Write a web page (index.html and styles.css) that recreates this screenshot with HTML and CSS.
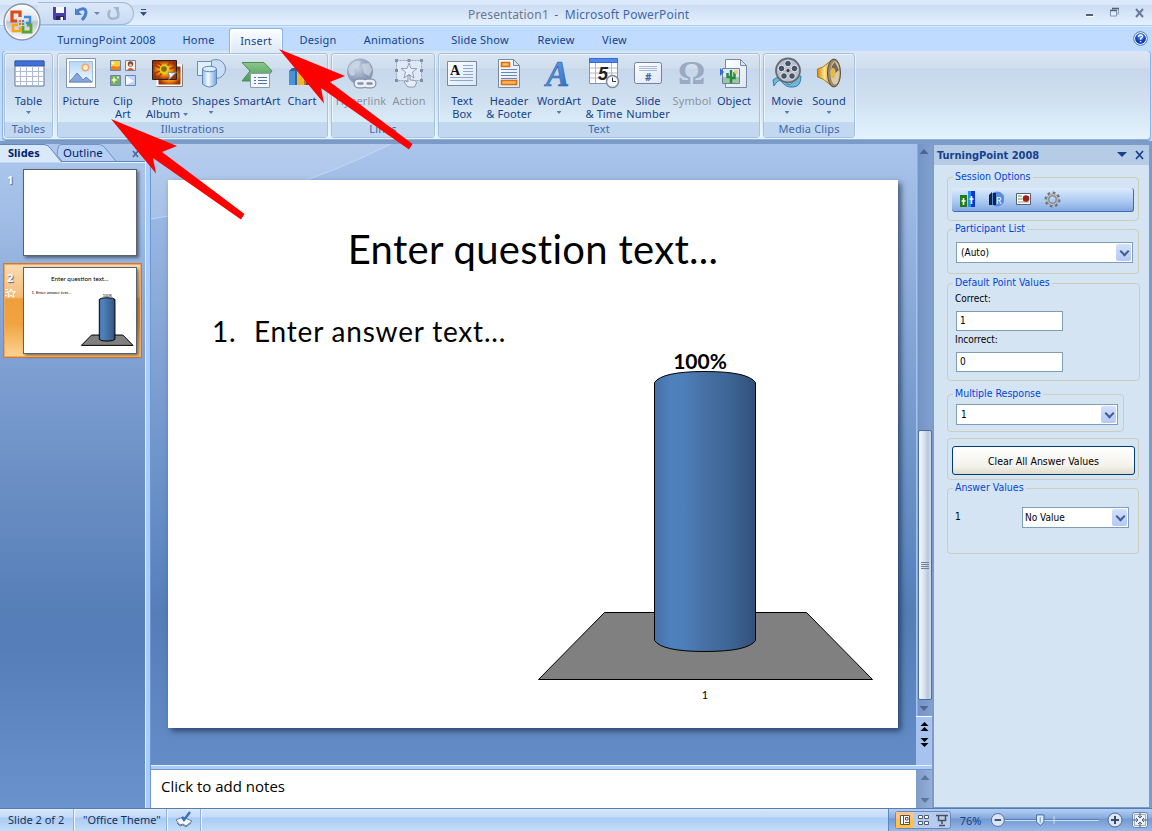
FILE: index.html
```html
<!DOCTYPE html>
<html lang="en">
<head>
<meta charset="utf-8">
<title>Presentation1 - Microsoft PowerPoint</title>
<link rel="stylesheet" href="styles.css">
</head>
<body>
<svg class="defs" width="0" height="0">
  <defs>
    <linearGradient id="cyl"><stop offset="0" stop-color="#4571a6"/><stop offset=".16" stop-color="#4f81bd"/><stop offset=".3" stop-color="#4d7eb9"/><stop offset=".52" stop-color="#466fa3"/><stop offset=".75" stop-color="#3d6594"/><stop offset="1" stop-color="#31507a"/></linearGradient>
    <linearGradient id="orb" x2="0" y2="1"><stop offset="0" stop-color="#fff"/><stop offset=".45" stop-color="#dde1e9"/><stop offset=".5" stop-color="#bcc4d2"/><stop offset="1" stop-color="#fff"/></linearGradient>
    <linearGradient id="paper" x2="1" y2="1"><stop offset="0" stop-color="#fff"/><stop offset="1" stop-color="#dce6f5"/></linearGradient>
    <linearGradient id="sky" x2="0" y2="1"><stop offset="0" stop-color="#b5d7f9"/><stop offset="1" stop-color="#eef7ff"/></linearGradient>
    <linearGradient id="tube"><stop offset="0" stop-color="#8dbbe8"/><stop offset=".4" stop-color="#f4faff"/><stop offset="1" stop-color="#72a5d9"/></linearGradient>
    <linearGradient id="green" x2="0" y2="1"><stop offset="0" stop-color="#8bc58c"/><stop offset="1" stop-color="#4b9d50"/></linearGradient>
    <linearGradient id="wordart" x2="1" y2="1"><stop offset="0" stop-color="#78b1ef"/><stop offset="1" stop-color="#2365bd"/></linearGradient>
    <linearGradient id="gold" x2="1"><stop offset="0" stop-color="#d28b10"/><stop offset=".45" stop-color="#ffe58b"/><stop offset="1" stop-color="#b97a13"/></linearGradient>
    <radialGradient id="globe" cx=".4" cy=".35"><stop offset="0" stop-color="#c8d3e3"/><stop offset="1" stop-color="#8b9ab7"/></radialGradient>
    <radialGradient id="burst"><stop offset="0" stop-color="#6b5300"/><stop offset=".25" stop-color="#e6c719"/><stop offset=".6" stop-color="#ef8a10"/><stop offset="1" stop-color="#9b2f06"/></radialGradient>
    <radialGradient id="help" cy=".3"><stop offset="0" stop-color="#5b9bff"/><stop offset="1" stop-color="#0a39b5"/></radialGradient>
    <symbol id="chart" viewBox="0 0 730 548" overflow="visible">
      <path class="line" d="M370.500 499.500L436.500 432.500H638.500L704.500 499.500Z" fill="#808080"/>
      <path class="line" d="M486.500 202.500Q494 191.500 537 191.500Q580 191.500 587.500 202.500V460.500Q580 471.500 537 471.500Q494 471.500 486.500 460.500Z" fill="url(#cyl)"/>
    </symbol>
    <symbol id="arrow" viewBox="0 0 134 101"><path d="M0 0L66 27L51 33L133.500 95L130 100.500L42 39L45 54.500Z" fill="#f00"/></symbol>
  </defs>
</svg>

<div class="window">
  <header class="titlebar">
    <div class="quick">
      <svg width="16" height="16" viewBox="0 0 16 16"><path d="M1 1H14V14H2L1 13Z" fill="#493fb0"/><path d="M4 1H12V7H4Z" fill="#f6f9ff"/><path d="M4 10H12V14H4Z" fill="#26235e"/><path d="M8.500 11H11V14H8.500Z" fill="#fff"/></svg>
      <svg width="16" height="16" viewBox="0 0 16 16"><path d="M3 5Q11 0 12 6Q12 10 8 14" fill="none" stroke="#4a7fd0" stroke-width="3"/><path d="M1 2V9H8Z" fill="#4a7fd0"/></svg>
      <svg class="drop" width="6" height="4" viewBox="0 0 6 4"><path d="M0 0H6L3 3Z" fill="#6789bb"/></svg>
      <svg width="16" height="16" viewBox="0 0 16 16"><path d="M4 4Q1 9 4 12Q8 14 12 11Q13 7 11 4" fill="none" stroke="#a6b7d1" stroke-width="2.600"/><path d="M7 1H13V7Z" fill="#a6b7d1"/></svg>
    </div>
    <svg class="customize" width="7" height="8" viewBox="0 0 7 8"><path d="M1 .5H6" stroke="#33517f"/><path d="M0 3H7L3.500 7Z" fill="#33517f"/></svg>
    <h1 class="title"><span class="doc">Presentation1</span> - &nbsp;Microsoft PowerPoint</h1>
    <div class="winbtns">
      <svg width="64" height="14" viewBox="0 0 64 14"><path d="M4 9H11" stroke="#55606f" stroke-width="2"/><path d="M4 10.500H12" stroke="#fff"/><path d="M30.500 4V2.500H36.500V8H35" fill="none" stroke="#8ba1c3"/><path d="M28.500 4.500H34.500V10H28.500Z" fill="#e4eefb" stroke="#7f98be"/><path d="M28 4.500H35M30 2.500H37" stroke="#55606f" stroke-width="1.500"/><path d="M54 3L61 11M61 3L54 11" stroke="#6a7b99" stroke-width="2"/></svg>
    </div>
    <svg class="orb" width="38" height="38" viewBox="0 0 38 38"><circle cx="19" cy="19" r="18" fill="url(#orb)" stroke="#8795ac" stroke-width="1.300"/><circle cx="19" cy="19" r="16.500" fill="none" stroke="#fff"/><g fill="none" stroke-width="3.200"><path d="M17 14V9H9V18H14" stroke="#dc4b12"/><path d="M21 14H27V20H23" stroke="#3b8be0" stroke-width="2.400"/><path d="M15 22H10V28H17V24" stroke="#f5a51a" stroke-width="2.600"/><path d="M20 23V29H28V22H24" stroke="#58a437" stroke-width="2.800"/></g><path d="M16 17H18V19H16ZM16 20H18V22H16Z" fill="#e47412"/><path d="M19 17H21V19H19Z" fill="#398ad6"/><path d="M19 20H21V22H19Z" fill="#5ba231"/></svg>
  </header>

  <nav class="tabs">
    <span class="tab t-tp">TurningPoint 2008</span><span class="tab t-home">Home</span><span class="tab t-insert active">Insert</span><span class="tab t-design">Design</span><span class="tab t-anim">Animations</span><span class="tab t-show">Slide Show</span><span class="tab t-review">Review</span><span class="tab t-view">View</span>
    <svg class="help" width="15" height="15" viewBox="0 0 15 15"><circle cx="7.500" cy="7.500" r="6.800" fill="#fff" stroke="#4b73ba"/><circle cx="7.500" cy="7.500" r="5.400" fill="url(#help)"/><path d="M5.500 6Q5.500 4 7.500 4Q9.600 4 9.500 5.700Q9.300 7 7.600 7.500V8.700M7.600 10V11.300" fill="none" stroke="#fff" stroke-width="1.400"/></svg>
  </nav>

  <div class="ribbon">
    <section class="group g-tables">
      <div class="items">
        <div class="item w47"><svg class="ic" viewBox="0 0 32 32"><path d="M2 4H31V29H2Z" fill="#fff" stroke="#66748c"/><path d="M2 4H31V9H2Z" fill="#3f6fd8" stroke="#3157b5"/><path d="M2 14.500H31M2 19.500H31M2 24.500H31M7.500 9V29M13.500 9V29M19.500 9V29M25.500 9V29" stroke="#aebbd2"/></svg><span>Table</span><i class="dd"></i></div>
      </div>
      <h2>Tables</h2>
    </section>
    <section class="group g-ill">
      <div class="items">
        <div class="item w46"><svg class="ic" viewBox="0 0 32 32"><path d="M1.500 1.500H30.500V30.500H1.500Z" fill="#fff" stroke="#8394ac"/><path d="M4.500 4.500H27.500V25H4.500Z" fill="url(#sky)" stroke="#9ac0e8"/><circle cx="20.500" cy="10.500" r="3.200" fill="#fff0d8" stroke="#f3a764" stroke-width="1.500"/><path d="M4 25Q9 20 12 16Q16 20 18 23L21 20L27 25Z" fill="#88a7d9" stroke="#6283bd"/></svg><span>Picture</span></div>
        <div class="item w38"><svg class="ic" viewBox="0 0 32 32"><g stroke="#7184a1"><path d="M3.500 3.500H13.500V13.500H3.500Z" fill="#f7d13d"/><path d="M18.500 3.500H28.500V13.500H18.500Z" fill="#f5efe8"/><path d="M3.500 18.500H13.500V28.500H3.500Z" fill="#6ab26a"/><path d="M18.500 18.500H28.500V28.500H18.500Z" fill="#bcd3fa"/></g><path d="M4 10Q7 8 9 10L13 9V13H4Z" fill="#ee7d21"/><circle cx="6" cy="6" r="1.500" fill="#fff6a1"/><circle cx="23.500" cy="7" r="2.700" fill="#7b4730"/><circle cx="23.500" cy="8" r="1.500" fill="#f3be91"/><path d="M20 13Q23.500 9 27 13Z" fill="#d94c2e"/><path d="M7 19L8 22L11 23L8 24L7 27L6 24L4 23L6 22Z" fill="#fff59a"/><circle cx="11" cy="20.500" r="1" fill="#fff"/><path d="M19 19L27 24L19 28Z" fill="#f5faff"/></svg><span>Clip<br>Art</span></div>
        <div class="item w50"><svg class="ic" viewBox="0 0 32 32"><path d="M6.500 8.500H30.500V28.500H6.500Z" fill="url(#burst)" stroke="#fff" stroke-width="2"/><path d="M5.500 29.500H31.500V7.500" fill="none" stroke="#8a7e72"/><path d="M1.500 3.500H25.500V22.500H1.500Z" fill="url(#burst)" stroke="#2b201a"/><g stroke="#a63b07" stroke-width="1.500"><path d="M2 7L9 11M5 4L11 9M2 17L9 14M21 4L16 9M25 10L18 12M6 22L11 16"/></g><circle cx="13.500" cy="12.500" r="5" fill="#e6cb22"/><circle cx="13" cy="12" r="2.800" fill="#846d0c"/><path d="M25.500 15L18 22.500Q19 18 17 15Q22 17 25.500 15Z" fill="#fff" stroke="#888"/></svg><span>Photo</span><span>Album <i class="dd inline"></i></span></div>
        <div class="item w38"><svg class="ic" viewBox="0 0 32 32"><circle cx="21" cy="12" r="9.500" fill="#c9ddf5" stroke="#6e8cb8"/><path d="M2.500 4.500H16.500V18.500H2.500Z" fill="#e3effc" stroke="#6e8cb8"/><path d="M7.500 12V27Q14.500 33 21.500 27V12Z" fill="url(#tube)" stroke="#5b87bd"/><ellipse cx="14.500" cy="12" rx="7" ry="2.700" fill="#dceeff" stroke="#5b87bd"/></svg><span>Shapes</span><i class="dd"></i></div>
        <div class="item w54"><svg class="ic" viewBox="0 0 32 32"><path d="M1 5.500H23L31 14L23 24H1L9 14Z" fill="url(#green)" stroke="#4c8f58"/><path d="M9.500 16.500H28.500V30.500H9.500Z" fill="#f4f8fd" stroke="#8c9cb5"/><path d="M13 20.500H15M17 20.500H26M13 23.500H15M17 23.500H26M13 26.500H15M17 26.500H26" stroke="#52739d"/></svg><span>SmartArt</span></div>
        <div class="item w36"><svg class="ic" viewBox="0 0 32 32"><path d="M3 14L6 11H12V28H3Z" fill="#2e67a5"/><path d="M3 14H9V28H3Z" fill="#4a91d6"/><path d="M11 6L14 3H21V28H11Z" fill="#b37d10"/><path d="M11 6H18V28H11Z" fill="#f0b52b"/><path d="M20 13L23 10H29V28H20Z" fill="#a52a20"/></svg><span>Chart</span></div>
      </div>
      <h2>Illustrations</h2>
    </section>
    <section class="group g-links">
      <div class="items">
        <div class="item w58 off"><svg class="ic" viewBox="0 0 32 32"><circle cx="15" cy="14.500" r="13" fill="url(#globe)"/><path d="M5 8Q10 2 16 4L14 9L9 12L10 18L6 19Q1 13 5 8ZM17 7L24 6L27 13L24 19L19 16Z" fill="#d6dde8" opacity=".65"/><g fill="none" stroke="#8491a9" stroke-width="5"><rect x="11" y="24" width="9" height="5" rx="2.500"/><rect x="20" y="24" width="9" height="5" rx="2.500"/></g><g fill="none" stroke="#edf1f7" stroke-width="2.500"><rect x="11" y="24" width="9" height="5" rx="2.500"/><rect x="20" y="24" width="9" height="5" rx="2.500"/></g></svg><span>Hyperlink</span></div>
        <div class="item w38 off"><svg class="ic" viewBox="0 0 32 32"><path d="M3.500 3.500H28.500V23.500H3.500Z" fill="#dfe8f5" stroke="#94a2bb" stroke-dasharray="2 1"/><path d="M16 6L18 11.500H24L19.500 15L21 21L16 17.500L11 21L12.500 15L8 11.500H14Z" fill="#e8eff8" stroke="#93a0b8"/><path d="M2 2H5V5H2ZM14.500 2H17.500V5H14.500ZM27 2H30V5H27ZM2 12H5V15H2ZM27 12H30V15H27ZM2 22H5V25H2ZM27 22H30V25H27Z" fill="#8090ab"/><path d="M15 18Q17 17 17 20V23Q24 23 23.500 26L21.500 30H15L11 25Q12 23 15 25Z" fill="#e9eef6" stroke="#8a99b3"/></svg><span>Action</span></div>
      </div>
      <h2>Links</h2>
    </section>
    <section class="group g-text">
      <div class="items">
        <div class="item w46"><svg class="ic" viewBox="0 0 32 32"><path d="M1.500 4.500H30.500V28.500H1.500Z" fill="url(#paper)" stroke="#7889a2"/><path d="M17 8.500H27M17 11.500H27M17 14.500H27M17 17.500H27M4 20.500H27M4 23.500H27" stroke="#8ba6cf"/><text x="4" y="18" class="glyph serif" font-size="14">A</text></svg><span>Text<br>Box</span></div>
        <div class="item w48"><svg class="ic" viewBox="0 0 32 32"><path d="M5.500 2.500H20.500L26.500 8.500V30.500H5.500Z" fill="url(#paper)" stroke="#7889a2"/><path d="M20.500 2.500V8.500H26.500Z" fill="#d7e4f6" stroke="#7889a2"/><path d="M8.500 5.500H16.500V9.500H8.500ZM8.500 23.500H23.500V27.500H8.500Z" fill="#ffb962" stroke="#d96f0b" stroke-width="1.600"/><path d="M8 12.500H24M8 15.500H24M8 18.500H24M8 21.500H24" stroke="#6386b8"/></svg><span>Header<br>&amp; Footer</span></div>
        <div class="item w52"><svg class="ic" viewBox="0 0 32 32"><text x="3" y="29" class="glyph wordart">A</text></svg><span>WordArt</span><i class="dd"></i></div>
        <div class="item w38"><svg class="ic" viewBox="0 0 32 32"><path d="M1.500 1.500H29.500V26.500H1.500Z" fill="#fff" stroke="#8493aa"/><path d="M1.500 1.500H29.500V5.500H1.500Z" fill="#5187ee" stroke="#376bcd"/><path d="M2 11H29M2 16H29M2 21H29M7.500 6V26M23.500 6V26" stroke="#b2b9c5"/><text x="10" y="23" class="glyph date">5</text><circle cx="24.500" cy="24.500" r="6" fill="#f4f7fb" stroke="#7a889e" stroke-width="1.500"/><path d="M24.500 20.500V24.500H28" fill="none" stroke="#333"/></svg><span>Date<br>&amp; Time</span></div>
        <div class="item w50"><svg class="ic" viewBox="0 0 32 32"><rect x="2.500" y="5.500" width="27" height="21" rx="2" fill="url(#paper)" stroke="#71839f"/><path d="M7 9.500H25M7 11.500H25M7 13.500H25" stroke="#aab9d1"/><text x="13" y="24" class="glyph hash">#</text></svg><span>Slide<br>Number</span></div>
        <div class="item w38 off"><svg class="ic" viewBox="0 0 32 32"><text x="2" y="27" class="glyph omega">Ω</text></svg><span>Symbol</span></div>
        <div class="item w46"><svg class="ic" viewBox="0 0 32 32"><path d="M7.500 2.500H22.500L28.500 8.500V30.500H7.500Z" fill="url(#paper)" stroke="#7889a2"/><path d="M22.500 2.500V8.500H28.500Z" fill="#d7e4f6" stroke="#7889a2"/><path d="M4.500 11.500H21.500V26.500H4.500Z" fill="#d7eafd" stroke="#6d8199"/><path d="M5 20H21V26H5Z" fill="#9cc7a7"/><path d="M13 13V26M9.500 16V20H13M16.500 15V21H13" fill="none" stroke="#28893f" stroke-width="2.500"/><circle cx="18" cy="15" r="2" fill="#f1ca66"/><path d="M2 11L6 15L2 19Z" fill="#2d6fd0"/></svg><span>Object</span></div>
      </div>
      <h2>Text</h2>
    </section>
    <section class="group g-media">
      <div class="items">
        <div class="item w46"><svg class="ic" viewBox="0 0 32 32"><path d="M2 23Q8 17 14 25Q20 32 24 20L30 19Q30 30 22 30Q15 31 10 24Q7 22 3 29Z" fill="#72b5da" stroke="#357faa"/><circle cx="17" cy="13.500" r="12" fill="#b9bec6" stroke="#646a74" stroke-width="1.800"/><g fill="#44546a" stroke="#e6eaef"><circle cx="17" cy="6.500" r="3.300"/><circle cx="10.500" cy="11.500" r="3.300"/><circle cx="23.500" cy="11.500" r="3.300"/><circle cx="13" cy="19" r="3.300"/><circle cx="21" cy="19" r="3.300"/></g><circle cx="17" cy="13.500" r="1.500" fill="#333"/></svg><span>Movie</span><i class="dd"></i></div>
        <div class="item w38"><svg class="ic" viewBox="0 0 32 32"><path d="M4.500 12L10 10L20 2V30L10 22L4.500 20Z" fill="url(#gold)" stroke="#b1781a"/><ellipse cx="21" cy="16" rx="6.500" ry="14" fill="#9b8a6b" stroke="#57513f"/><ellipse cx="22" cy="16" rx="4.500" ry="11.500" fill="#d9cda9"/><path d="M22 5Q16 10 20 18L26 13Z" fill="#736b58"/><ellipse cx="20" cy="16" rx="2.500" ry="5" fill="#e7b84b"/></svg><span>Sound</span><i class="dd"></i></div>
      </div>
      <h2>Media Clips</h2>
    </section>
  </div>

  <main class="work">
    <aside class="slides">
      <div class="sidetabs">
        <svg class="tabshape" width="146" height="20" viewBox="0 0 146 20"><path d="M0 1.500H44Q48 1.500 51 6L62 19.500H0Z" fill="#d9e8fb"/><path d="M58 5Q58 1.500 62 1.500H99Q103 1.500 106 6L117 19.500H63L57 12Z" fill="#b6d0f4" stroke="#7292c8"/><path d="M0 1.500H44Q48 1.500 51 6L61 18.500H145" fill="none" stroke="#6386bf"/><path d="M62 19.500H146" stroke="#e5f1ff"/><path d="M133 8L138 14M138 8L133 14" stroke="#45699f" stroke-width="1.600"/></svg>
        <b>Slides</b><span>Outline</span>
      </div>
      <div class="entry first"><div class="num">1</div><div class="thumb"></div></div>
      <div class="entry selected"><div class="num">2<svg width="12" height="10" viewBox="0 0 12 10"><path d="M0 1.500H4M0 4.500H3M0 7.500H3" stroke="#fff"/><path d="M7 .7L8.200 3.800H11.300L9 5.900L9.800 9.200L7 7.300L4.200 9.200L5 5.900L2.700 3.800H5.800Z" fill="none" stroke="#fff"/></svg></div><div class="thumb"><svg width="113" height="85" viewBox="0 0 730 548"><use href="#chart"/><text x="174" y="81" class="mini q">Enter question text...</text><text x="48" y="166" class="mini a">1. Enter answer text...</text><text x="508" y="186" class="mini p">100%</text></svg></div></div>
    </aside>
    <div class="split"></div>
    <div class="center">
      <div class="stage">
        <div class="canvas">
          <svg class="swoosh" width="765" height="180" viewBox="0 0 765 180" preserveAspectRatio="none"><path d="M0 0H240Q130 55 0 75Z" fill="#fff" opacity=".14"/><path d="M0 75Q130 55 240 0" fill="none" stroke="#d4e5fb" opacity=".6"/></svg>
          <article class="slide">
            <h3 class="question">Enter question text...</h3>
            <p class="answer"><span>1.</span><span class="atext">Enter answer text...</span></p>
            <div class="plot">
              <svg class="chart" width="730" height="548"><use href="#chart"/></svg>
              <span class="pct">100%</span><span class="cat">1</span>
            </div>
          </article>
        </div>
        <div class="vscroll"><i class="up"></i><div class="grip"><i></i><i></i><i></i><i></i></div><i class="down"></i><div class="pager"><svg width="16" height="48" viewBox="0 0 16 48"><path d="M4.500 9L8.500 5L12.500 9ZM4.500 14L8.500 10L12.500 14ZM4.500 21H12.500L8.500 25ZM4.500 26H12.500L8.500 30Z" fill="#000"/></svg></div></div>
      </div>
      <div class="hsplit"></div>
      <div class="notes"><div class="ntext">Click to add notes</div><div class="nscroll"><i class="up"></i><i class="down"></i></div></div>
    </div>
    <aside class="pane">
      <div class="phead"><b>TurningPoint 2008</b><svg width="28" height="10" viewBox="0 0 28 10"><path d="M0 2H10L5 7Z" fill="#15428b"/><path d="M19 1L26 9M26 1L19 9" stroke="#15428b" stroke-width="1.700"/></svg></div>
      <div class="pbody">
        <fieldset class="f-session"><legend>Session Options</legend>
          <div class="toolbar">
            <svg width="16" height="17" viewBox="0 0 16 17"><path d="M0 4H7V16H0Z" fill="#237a19"/><path d="M8 0H15V16H8Z" fill="#0836d6"/><path d="M8 0H11V16H8Z" fill="#2590f0"/><path d="M3.500 7V14M1.500 10H5.500M11.500 5V13M9.500 8H13.500" stroke="#fff" stroke-width="1.600"/></svg>
            <svg width="16" height="17" viewBox="0 0 16 17"><circle cx="9" cy="8" r="7.500" fill="#558ee0"/><path d="M1 4L4 1V14H1ZM5 2H8V14H5Z" fill="#142342"/><text x="8" y="13" class="glyph letter">R</text></svg>
            <svg width="16" height="17" viewBox="0 0 16 17"><path d="M.5 2.500H14.500V13.500H.5Z" fill="#fff" stroke="#52606f"/><path d="M2 5H6M2 8H6" stroke="#4da23e"/><path d="M2 11H13" stroke="#999"/><circle cx="10" cy="7.500" r="3.300" fill="#9e2013"/></svg>
            <svg width="17" height="17" viewBox="0 0 17 17"><circle cx="8.500" cy="8.500" r="6.700" fill="none" stroke="#727476" stroke-width="2.600" stroke-dasharray="2.600 2.660"/><circle cx="8.500" cy="8.500" r="4.500" fill="none" stroke="#8c8e90" stroke-width="3"/><circle cx="8.500" cy="8.500" r="5" fill="none" stroke="#c7c9ca"/></svg>
          </div></fieldset>
        <fieldset class="f-part"><legend>Participant List</legend><div class="combo"><span>(Auto)</span><i></i></div></fieldset>
        <fieldset class="f-default"><legend>Default Point Values</legend><label>Correct:</label><div class="input">1</div><label>Incorrect:</label><div class="input">0</div></fieldset>
        <fieldset class="f-multi"><legend>Multiple Response</legend><div class="combo"><span>1</span><i></i></div></fieldset>
        <fieldset class="f-clear"><button>Clear All Answer Values</button></fieldset>
        <fieldset class="f-answer"><legend>Answer Values</legend><div class="row"><label>1</label><div class="combo"><span>No Value</span><i></i></div></div></fieldset>
      </div>
    </aside>
  </main>

  <footer class="status">
    <span class="cell c1">Slide 2 of 2</span><span class="cell c2">"Office Theme"</span>
    <span class="cell c3"><svg width="18" height="17" viewBox="0 0 18 17"><path d="M1 9L8 6L17 10L11 15L8 13L5 14Z" fill="#f5f9ff" stroke="#6a7e9f"/><path d="M2 12L5 15L8 14L11 16L16 12" fill="none" stroke="#6a7e9f"/><path d="M7 6L9 9L15 1" fill="none" stroke="#3970c5" stroke-width="2.400"/></svg></span>
    <div class="tools">
      <svg class="views" width="56" height="18" viewBox="0 0 56 18"><rect x=".5" y=".5" width="55" height="17" rx="2" fill="#b3ccef" stroke="#6988b9"/><path d="M1 1H19V8H1Z" fill="#f7c48b"/><path d="M1 8H19V17H1Z" fill="#ffc246"/><path d="M5.500 4.500H14.500V13.500H5.500ZM8.500 4.500V13.500" fill="#fff" stroke="#5f5240"/><path d="M10.500 6.500H13V9H10.500ZM10 11.500H14" fill="none" stroke="#5f5240"/><path d="M23.500 4.500H27.500V7.500H23.500ZM29.500 4.500H33.500V7.500H29.500ZM23.500 10.500H27.500V13.500H23.500ZM29.500 10.500H33.500V13.500H29.500Z" fill="#fff" stroke="#505a6c"/><path d="M41 4.500H53M43.500 5V9.500H50.500V5M47 10V13M44 14.500H50" fill="none" stroke="#4a4f59" stroke-width="1.500"/></svg>
      <span class="zoom">76%</span>
      <svg class="slider" width="128" height="18" viewBox="0 0 128 18"><path d="M16 8.500H118" stroke="#5478ae"/><path d="M16 9.500H118M69.500 5V13" stroke="#d9e8fb"/><circle cx="8.500" cy="9" r="7" fill="#dce5f3" stroke="#4c6896"/><circle cx="126.500" cy="9" r="7" fill="none"/><path d="M5 9H12" stroke="#3a4a63" stroke-width="2"/><path d="M50.500 3.500H58.500V11L54.500 15L50.500 11Z" fill="#dbe9fb" stroke="#3d659f"/><path d="M54.500 6V12" stroke="#6688b8"/></svg>
      <svg class="plus" width="16" height="18" viewBox="0 0 16 18"><circle cx="8" cy="9" r="7" fill="#dce5f3" stroke="#4c6896"/><path d="M4 9H12M8 5V13" stroke="#3a4a63" stroke-width="2"/></svg>
      <svg class="fit" width="16" height="16" viewBox="0 0 16 16"><rect x=".5" y=".5" width="15" height="15" rx="2" fill="#eaf1fb" stroke="#6884ad"/><path d="M2.500 2.500H13.500V13.500H2.500Z" fill="none" stroke="#59677d" stroke-dasharray="1 1"/><path d="M8 1V6M6 4L8 6L10 4M8 15V10M6 12L8 10L10 12M1 8H6M4 6L6 8L4 10M15 8H10M12 6L10 8L12 10" fill="none" stroke="#4e5b70"/></svg>
    </div>
  </footer>

  <svg class="pointer p1" width="134" height="101"><use href="#arrow"/></svg>
  <svg class="pointer p2" width="134" height="101"><use href="#arrow"/></svg>
</div>
</body>
</html>
```
FILE: styles.css
```css
* { box-sizing: border-box; }
body { margin: 0; font-family: "Noto Sans", "Open Sans", sans-serif; font-size: 11px; color: #15428b; }
h1, h2, h3, p { margin: 0; font-weight: normal; }
svg { display: block; flex: none; }
.defs { position: absolute; }
.window { position: relative; width: 1152px; height: 831px; overflow: hidden; display: flex; flex-direction: column; background: #bfdbff; }

/* Title bar */
.titlebar { position: relative; height: 27px; flex: none; display: flex; background: linear-gradient(#dbe9fb 0 5px, #cbdcf3 5px, #e3effd 24px, #e3effd 25px, #a9cff0 25px 26px, #d8e8fb 26px); }
.quick { width: 96px; height: 23px; margin: 2px 0 0 38px; padding: 0 0 0 14px; display: flex; align-items: center; border: 1px solid #a0b9dc; border-left: none; border-radius: 0 12px 12px 0; background: linear-gradient(#dce8f8, #c8daf2); }
.quick svg + svg { margin-left: 6px; }
.quick .drop { margin-left: 4px !important; }
.customize { margin: 9px 0 0 6px; }
.title { margin: 7px 0 0 321px; font-size: 12px; line-height: 15px; letter-spacing: .17px; color: #3e6aaa; white-space: nowrap; }
.doc { color: #6a7890; margin-right: 2px; }
.winbtns { margin: 6px 6px 0 auto; }
.orb { position: absolute; left: 3px; top: 3px; z-index: 3; }

/* Tabs */
.tabs { height: 24px; flex: none; display: flex; align-items: flex-start; padding-left: 45px; background: #bfdbff; position: relative; }
.tab { height: 24px; line-height: 26px; text-align: center; white-space: nowrap; letter-spacing: .2px; }
.t-tp { width: 123px; } .t-home { width: 61px; } .t-insert { width: 54px; } .t-design { width: 70px; } .t-anim { width: 82px; } .t-show { width: 90px; } .t-review { width: 62px; } .t-view { width: 55px; }
.tab.active { margin: 1px 0 0; height: 25px; line-height: 24px; z-index: 1; border: 1px solid #8db2e3; border-bottom: none; border-radius: 3px 3px 0 0; background: linear-gradient(#fdfeff, #e8f1fc 60%, #dde8f6); box-shadow: inset 1px 1px #fff, inset -1px 0 #fff; }
.help { margin: 4px 4px 0 auto; }

/* Ribbon */
.ribbon { height: 90px; flex: none; margin: -1px 1px 0 2px; padding: 2px; display: flex; gap: 3px; border: 1px solid #8db2e3; border-radius: 4px; background: linear-gradient(#dbe6f4 0, #cfddec 17px, #c6d7ec 18px, #d1e1f1 52px, #e3f4ff 88px); box-shadow: 0 1px #7c97bd; }
.group { height: 85px; display: flex; flex-direction: column; border: 1px solid #a6c2df; border-radius: 3px; box-shadow: inset 1px 1px rgba(255,255,255,.5), 1px 0 rgba(255,255,255,.5); overflow: hidden; }
.g-tables { width: 49px; margin-left: -1px; } .g-ill { width: 271px; margin-left: 1px; } .g-links { width: 104px; } .g-text { width: 322px; } .g-media { width: 92px; }
.items { flex: 1; display: flex; padding-top: 3px; }
.item { flex: none; display: flex; flex-direction: column; align-items: center; text-align: center; line-height: 13px; white-space: nowrap; letter-spacing: .1px; }
.ic { width: 32px; height: 32px; margin-bottom: 5px; }
.off { color: #8d939e; }
.w36 { width: 36px; } .w38 { width: 38px; } .w46 { width: 46px; } .w47 { width: 47px; } .w48 { width: 48px; } .w50 { width: 50px; } .w52 { width: 52px; } .w54 { width: 54px; } .w58 { width: 58px; }
.dd { width: 5px; height: 3px; margin-top: 4px; background: #567db1; clip-path: polygon(0 0, 100% 0, 50% 100%); }
.dd.inline { display: inline-block; margin: 0 0 2px; }
.group h2 { height: 15px; line-height: 14px; font-size: 11px; text-align: center; color: #3e6aaa; background: #c1d8f0; letter-spacing: .15px; }
.glyph { font-family: "Noto Sans", sans-serif; }
.glyph.serif { font-family: "Liberation Serif", serif; font-weight: bold; fill: #111; }
.wordart { font: italic bold 35px "Liberation Serif", serif; fill: url(#wordart); stroke: #2d5fa6; stroke-width: .6px; }
.date { font: italic bold 18px "Liberation Sans", sans-serif; fill: #222; }
.hash { font-size: 10px; font-weight: bold; fill: #4168aa; }
.omega { font: bold 34px "Liberation Serif", serif; fill: #9ba9c1; }
.letter { font-size: 9px; fill: #fff; }

/* Work area */
.work { height: 667px; flex: none; margin-top: 1px; padding-top: 3px; display: flex; background: #7c9bc9; }
.slides { width: 145px; flex: none; background: linear-gradient(#aec8ec, #9fbce5 80px, #88a8d8 160px, #7194c9 300px, #577fb8 460px, #557eb8 500px, #6a92cd 664px); }
.sidetabs { height: 19px; display: flex; position: relative; line-height: 18px; color: #001f6b; }
.sidetabs b { font-size: 11px; margin-left: 8px; width: 55px; z-index: 1; }
.sidetabs span { z-index: 1; font-size: 11.5px; }
.tabshape { position: absolute; left: 0; top: -1px; }
.entry { display: flex; }
.entry.first { margin: 6px 0 7px 3px; }
.num { width: 20px; padding-left: 4px; font-size: 11px; line-height: 14px; font-weight: bold; color: #fff; text-shadow: 1px 1px 1px #47658f; padding-top: 4px; }
.num svg { margin: 3px 0 0 -3px; }
.thumb { width: 114px; height: 87px; background: #fff; border: 1px solid #5a6270; box-shadow: 2px 2px 3px rgba(0,0,0,.45); }
.entry.selected { width: 139px; height: 95px; margin-left: 3px; padding: 3px 0 0; border: 1px solid #d8762a; outline: 1px solid #f0a860; outline-offset: -2px; background: linear-gradient(#fadcb2, #f4bd7a 33px, #ee9f3b 35px, #f0a441 60px, #fbd493); }
.entry.selected .num { width: 19px; padding-left: 3px; }
.entry.selected .num svg { margin-left: -3px; }
.mini { font-family: Lato, sans-serif; fill: #000; }
.mini.q { font-size: 41px; } .mini.a { font-size: 27px; } .mini.p { font-size: 24px; }
.line { stroke: #000; stroke-width: 1px; vector-effect: non-scaling-stroke; }
.split { width: 6px; flex: none; background: linear-gradient(90deg, #e0eeff 0 1px, #a9ccfb 1px 5px, #6e97cf 5px); }
.center { width: 781px; flex: none; display: flex; flex-direction: column; }
.stage { height: 621px; display: flex; }
.canvas { position: relative; width: 765px; padding: 36px 0 0 17px; background: linear-gradient(#aac5ec, #98b6e2 80px, #83a4d5 200px, #5d86c0 420px, #557db6 470px, #648dc8 621px); }
.swoosh { position: absolute; left: 0; top: 0; }
.slide { position: relative; width: 730px; height: 548px; background: #fff; box-shadow: 3px 3px 6px rgba(20,40,70,.7); color: #000; font-family: Lato, sans-serif; }
.question { padding-top: 44px; text-align: center; font-size: 40px; line-height: 50px; letter-spacing: .3px; }
.answer { display: flex; padding: 38px 0 0 44px; font-size: 28px; line-height: 38px; letter-spacing: .8px; }
.answer span:first-child { width: 42px; }
.plot { position: absolute; left: 0; top: 0; width: 730px; height: 548px; }
.pct { position: absolute; left: 482px; width: 100px; top: 169px; text-align: center; font-size: 21px; line-height: 24px; font-weight: bold; }
.cat { position: absolute; left: 487px; width: 100px; top: 508px; text-align: center; font-size: 11px; line-height: 14px; }
.vscroll { width: 16px; display: flex; flex-direction: column; align-items: center; background: linear-gradient(90deg, #a3c2ee 0 1px, #7394c4 2px, #82a0cf); }
.up, .down { width: 9px; height: 5px; background: #4c6592; clip-path: polygon(50% 0, 100% 100%, 0 100%); }
.down { clip-path: polygon(0 0, 100% 0, 50% 100%); }
.vscroll .up { margin-top: 5px; }
.grip { width: 14px; height: 270px; margin: 276px 0 6px 2px; border: 1px solid #4e6c9b; border-radius: 2px; background: linear-gradient(90deg, #f4f8fc, #dbe4ee 40%, #b5c7de 75%, #d5e1f0); display: flex; flex-direction: column; align-items: center; justify-content: center; gap: 1px; }
.grip i { width: 8px; height: 1px; background: #71829b; }
.pager { width: 16px; height: 49px; margin-top: auto; border-top: 1px solid #fff; background: #a6c3ef; }
.hsplit { height: 5px; background: linear-gradient(#e5f1ff 0 1px, #a9ccfb 1px 4px, #6e97cf 4px); }
.notes { height: 38px; display: flex; background: #fff; }
.ntext { width: 765px; padding: 7px 0 0 10px; font-family: "Open Sans", sans-serif; font-size: 15px; line-height: 19px; color: #000; }
.nscroll { width: 16px; background: linear-gradient(90deg, #7092c3, #8aa7d3); display: flex; flex-direction: column; align-items: center; justify-content: space-between; padding: 5px 0 5px 2px; opacity: .9; }

/* Task pane */
.pane { width: 215px; height: 662px; margin: 1px 0 0 2px; background: #d5e4f3; color: #000; font-family: "DejaVu Sans Condensed", "DejaVu Sans", sans-serif; font-size: 10px; }
.phead { height: 20px; display: flex; align-items: center; justify-content: space-between; padding: 0 4px 0 3px; background: #b6cbe6; color: #15428b; font-size: 11px; }
.pbody { padding: 5px 0 0 13px; display: flex; flex-direction: column; }
fieldset { width: 192px; margin: 0; padding: 0; min-width: 0; border: 1px solid #cdcdbd; border-radius: 4px; }
legend { margin-left: 5px; padding: 0 2px; height: 14px; line-height: 13px; color: #0046d5; font-size: 10.500px; white-space: nowrap; }
.f-session { height: 51px; } .f-part { height: 52px; margin-top: 1px; } .f-default { width: 193px; height: 105px; margin-top: 2px; } .f-multi { width: 177px; height: 45px; margin-top: 6px; } .f-clear { height: 42px; margin-top: 6px; } .f-answer { height: 73px; margin-top: 1px; }
.toolbar { width: 182px; height: 24px; margin: 4px 0 0 4px; padding: 0 8px; display: flex; align-items: center; gap: 12px; border-radius: 3px; border-bottom: 1px solid #3f69b2; border-right: 1px solid #3f69b2; background: linear-gradient(#dcebfd, #aac9f1 60%, #83a9df); }
.combo { height: 21px; display: flex; align-items: center; padding: 0 1px 0 4px; border: 1px solid #7f9db9; background: #fff; }
.combo span { flex: 1; }
.combo i { position: relative; width: 15px; height: 17px; border-radius: 2px; background: linear-gradient(#d3e0fd, #b3c9f7); }
.combo i::after { content: ""; position: absolute; left: 5px; top: 4px; width: 5px; height: 5px; border: solid #445e8b; border-width: 0 2px 2px 0; transform: rotate(45deg); }
.f-part .combo { width: 177px; margin: 6px 0 0 8px; }
.f-multi .combo { width: 162px; margin: 3px 0 0 8px; }
.f-default label { display: block; margin-left: 7px; height: 20px; line-height: 18px; }
.input { width: 107px; height: 20px; margin: 1px 0 0 8px; padding-left: 3px; line-height: 18px; border: 1px solid #7f9db9; background: #fff; }
button { width: 183px; height: 29px; margin: 7px 0 0 4px; padding: 0; font: inherit; font-size: 10.500px; color: #000; border: 1px solid #003c74; border-radius: 3px; background: linear-gradient(#fff, #f3f2ec 70%, #e0dccc); display: block; }
.f-answer .row { display: flex; margin: 12px 0 0 7px; }
.row label { width: 67px; line-height: 19px; }
.row .combo { width: 107px; padding-left: 2px; }

/* Status bar */
.status { height: 24px; flex: none; display: flex; align-items: stretch; border-top: 1px solid #567db0; border-bottom: 1px solid #3e6db5; background: linear-gradient(#dcebff 0 1px, #d3e4fb 1px, #c4dbf8 8px, #a9cbf5 9px, #c5ddf9 22px); color: #15325f; }
.cell { display: flex; align-items: center; border-right: 1px solid #8fb1e0; box-shadow: 1px 0 #eef6ff; padding-bottom: 1px; white-space: nowrap; }
.c1 { width: 74px; padding-left: 8px; } .c2 { width: 93px; padding-left: 9px; } .c3 { width: 34px; padding-left: 8px; }
.tools { margin-left: auto; width: 264px; padding-left: 6px; display: flex; align-items: center; border-left: 1px solid #5e86c0; background: linear-gradient(#b4cff4, #86abe0 9px, #7399d0 10px, #99baea 22px); }
.zoom { width: 39px; text-align: center; color: #15428b; font-size: 11px; }
.slider { width: 118px; overflow: hidden; }
.plus { margin-left: -1px; }
.fit { margin-left: 9px; }

/* Callout arrows */
.pointer { position: absolute; z-index: 5; }
.p1 { left: 279px; top: 49px; }
.p2 { left: 111px; top: 119px; }
```
